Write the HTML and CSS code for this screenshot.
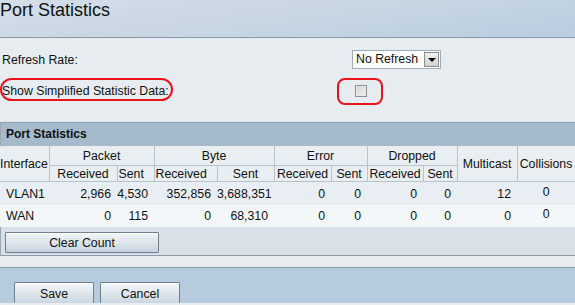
FILE: index.html
```html
<!DOCTYPE html>
<html>
<head>
<meta charset="utf-8">
<link rel="stylesheet" href="styles.css">
</head>
<body>
<header class="titlebar"><h1>Port Statistics</h1></header>
<main class="content">
  <div class="form">
    <div class="form-row">
      <span class="label">Refresh Rate:</span>
      <div class="select"><span class="select-text">No Refresh</span><span class="select-btn"><span class="tri"></span></span></div>
    </div>
    <div class="form-row">
      <span class="label marked">Show Simplified Statistic Data:<span class="ring ring-label"></span></span>
      <div class="check-wrap"><span class="checkbox"></span><span class="ring ring-box"></span></div>
    </div>
  </div>

  <section class="panel">
    <div class="panel-title">Port Statistics</div>
    <table class="stats">
      <colgroup>
        <col class="c49"><col class="c68"><col class="c37"><col class="c63"><col class="c57"><col class="c57"><col class="c36"><col class="c56"><col class="c34"><col class="c60"><col class="c58">
      </colgroup>
      <thead>
        <tr class="h1">
          <th rowspan="2" class="iface">Interface</th>
          <th colspan="2">Packet</th>
          <th colspan="2">Byte</th>
          <th colspan="2">Error</th>
          <th colspan="2">Dropped</th>
          <th rowspan="2">Multicast</th>
          <th rowspan="2">Collisions</th>
        </tr>
        <tr class="h2">
          <th>Received</th><th class="l">Sent</th><th class="l">Received</th><th>Sent</th>
          <th>Received</th><th>Sent</th><th>Received</th><th>Sent</th>
        </tr>
      </thead>
      <tbody>
        <tr class="odd">
          <td class="name">VLAN1</td><td>2,966</td><td>4,530</td><td>352,856</td><td>3,688,351</td>
          <td>0</td><td>0</td><td>0</td><td>0</td><td>12</td><td class="ctr up">0</td>
        </tr>
        <tr class="even">
          <td class="name">WAN</td><td>0</td><td>115</td><td>0</td><td>68,310</td>
          <td>0</td><td>0</td><td>0</td><td>0</td><td>0</td><td class="ctr up">0</td>
        </tr>
      </tbody>
    </table>
    <div class="panel-actions"><button class="btn btn-wide">Clear Count</button></div>
  </section>
  <div class="strip"></div>
</main>
<footer class="footer">
  <button class="btn btn-foot">Save</button>
  <button class="btn btn-foot">Cancel</button>
</footer>
</body>
</html>
```

FILE: styles.css
```css
html, body {
  margin: 0;
  padding: 0;
  overflow: hidden;
}
body {
  width: 575px;
  height: 305px;
  background: #e6ecf0;
  font-family: "Liberation Sans", Arial, sans-serif;
  font-size: 12px;
  color: #111;
}
.titlebar {
  height: 37px;
  border-bottom: 1px solid #8a99a6;
  background: linear-gradient(172deg, #d3dee8 0%, #c9d7e3 45%, #b9cde0 100%);
}
.titlebar h1 {
  margin: 0;
  padding: 0;
  font-size: 18px;
  font-weight: normal;
  line-height: 21px;
  color: #111;
}
.content {
  background: #e6ecf0;
}
.form {
  padding-top: 12px;
  display: flex;
  flex-direction: column;
  gap: 12px;
}
.form-row {
  display: grid;
  grid-template-columns: 352px 1fr;
  align-items: center;
  height: 19px;
}
.form-row + .form-row {
  height: 20px;
}
.label {
  padding-left: 2px;
  font-size: 12.3px;
  position: relative;
}
.marked { display: inline-block; width: max-content; }
.ring {
  position: absolute;
  border: 2px solid #e8141a;
  box-sizing: border-box;
}
.ring-label {
  left: 0;
  top: -6px;
  width: 173px;
  height: 23px;
  border-radius: 12px;
}
.select {
  display: flex;
  width: 89px;
  height: 19px;
  box-sizing: border-box;
  border: 1px solid #a4acb3;
  background: #fff;
}
.select-text {
  flex: 1;
  font-size: 12.3px;
  line-height: 17px;
  padding-left: 3px;
}
.select-btn {
  width: 15px;
  margin: 1px;
  box-sizing: border-box;
  border: 1px solid #8c8c8c;
  background: linear-gradient(#f0f0f0, #d2d2d2);
  display: flex;
  align-items: center;
  justify-content: center;
}
.tri {
  width: 0;
  height: 0;
  border-left: 4px solid transparent;
  border-right: 4px solid transparent;
  border-top: 4px solid #000;
  margin-top: 1px;
}
.check-wrap {
  position: relative;
  height: 20px;
  display: flex;
  align-items: center;
}
.checkbox {
  margin-left: 3px;
  width: 12px;
  height: 12px;
  box-sizing: border-box;
  border: 1px solid #8e8f8f;
  background: linear-gradient(135deg, #d0d0d0, #f4f4f4);
  box-shadow: inset 0 0 0 1px #e8e8e8;
}
.ring-box {
  left: -15px;
  top: -3px;
  width: 46px;
  height: 27px;
  border-radius: 8px;
}
.panel {
  margin-top: 21px;
  border-top: 1px solid #8d9dab;
  border-left: 1px solid #9aa8b4;
}
.panel-title {
  height: 23px;
  line-height: 23px;
  background: #a5bacb;
  font-weight: bold;
  font-size: 12px;
  padding-left: 5px;
}
.stats {
  border-collapse: collapse;
  table-layout: fixed;
  width: 575px;
  margin-left: -1px;
}
.c49 { width: 49px; }
.c68 { width: 68px; }
.c37 { width: 37px; }
.c63 { width: 63px; }
.c57 { width: 57px; }
.c36 { width: 36px; }
.c56 { width: 56px; }
.c34 { width: 34px; }
.c60 { width: 60px; }
.c58 { width: 58px; }
.stats th {
  background: #e8eef2;
  border: 1px solid #b8c3cc;
  font-weight: normal;
  font-size: 12.3px;
  padding: 0;
  text-align: center;
  white-space: nowrap;
  overflow: hidden;
}
.stats th.l { text-align: left; padding-left: 1px; }
.stats th.iface { text-align: left; border-left: none; }
.stats tr.h1 th { height: 19px; border-top: none; }
.stats tr.h2 th { height: 15px; }
.stats td {
  padding: 0 6px 0 0;
  text-align: right;
  white-space: nowrap;
  font-size: 12.3px;
  line-height: 14px;
}
.stats td.name { text-align: left; padding-left: 6px; }
.stats td.ctr { text-align: center; padding-right: 0; }
.stats tr.odd td { height: 23px; background: #e8eef3; }
.stats tr.even td { height: 22px; background: #f4f7fa; }
.stats tr.odd td.up { vertical-align: top; padding-top: 3px; height: 20px; }
.stats tr.even td.up { vertical-align: top; padding-top: 2px; height: 20px; }
.panel-actions {
  height: 29px;
  box-sizing: border-box;
  padding: 5px 0 0 4px;
  background: #d9e1e8;
  border-bottom: 1px solid #8c9ba8;
}
.strip {
  height: 11px;
  border-bottom: 1px solid #8c9ba8;
}
.btn {
  font-family: "Liberation Sans", Arial, sans-serif;
  font-size: 12.3px;
  color: #111;
  height: 21px;
  border: 1px solid #6f7f8c;
  border-radius: 1px;
  background: linear-gradient(#f3f6f8 0%, #dfe7ed 45%, #c6d3de 100%);
  padding: 0;
  box-shadow: inset 0 1px 0 #ffffff;
}
.btn-wide { width: 154px; }
.footer {
  height: 35px;
  box-sizing: border-box;
  overflow: hidden;
  background: #b7cbdf;
  padding: 14px 0 0 14px;
  display: flex;
  gap: 6px;
  align-items: flex-start;
}
.btn-foot { width: 80px; height: 24px; flex-shrink: 0; }
```
